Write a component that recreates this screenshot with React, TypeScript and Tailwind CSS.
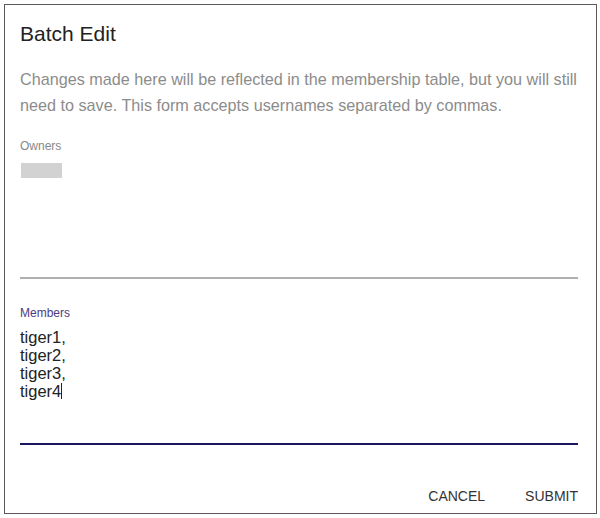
export default function App() {
  return (
    <div className="w-[600px] h-[518px] bg-white p-1 font-['Liberation_Sans',Arial,sans-serif]">
      <div className="flex flex-col h-[510px] w-[593px] border border-[#5a5a5a] px-[15px]">
        <h2 className="mt-[15px] text-[21px] leading-[28px] text-[#222]">Batch Edit</h2>
        <p className="mt-[18px] text-[16.2px] leading-[26px] text-[#8c8c8c]">
          Changes made here will be reflected in the membership table, but you will still need to save. This form
          accepts usernames separated by commas.
        </p>
        <div className="mt-[20px] text-[12px] leading-[16px] text-[#888]">Owners</div>
        <div className="mt-[9px] ml-[1px] h-[15px] w-[41px] bg-[#d2d2d2]" />
        <div className="mt-[99px] mr-[3px] h-[2px] bg-[#b0b0b0]" />
        <div className="mt-[26px] text-[12px] leading-[16px] text-[#4b3b82]">Members</div>
        <div className="mt-[7px] text-[16.5px] leading-[18px] text-[#222]">
          <div>tiger1,</div>
          <div>tiger2,</div>
          <div>tiger3,</div>
          <div className="flex items-center">
            tiger4<span className="inline-block h-[16px] w-px bg-[#222]" />
          </div>
        </div>
        <div className="mt-[43px] mr-[3px] h-[2px] bg-[#1c1660]" />
        <div className="mt-[43px] flex justify-end gap-[40px] pr-[3px] text-[14px] leading-[16px] text-[#333]">
          <button>CANCEL</button>
          <button>SUBMIT</button>
        </div>
      </div>
    </div>
  );
}
